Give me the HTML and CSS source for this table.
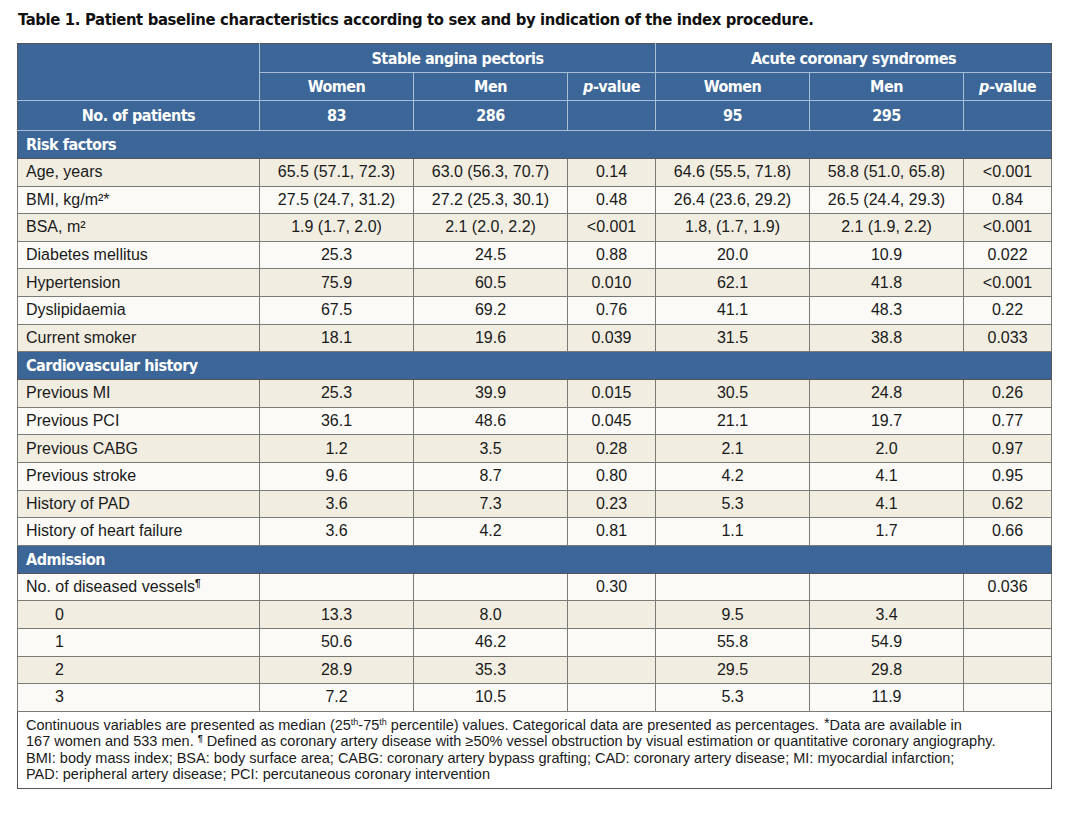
FILE: index.html
```html
<!DOCTYPE html>
<html>
<head>
<meta charset="utf-8">
<link rel="stylesheet" href="styles.css">
</head>
<body>
<div class="page">
<h1 class="title">Table 1. Patient baseline characteristics according to sex and by indication of the index procedure.</h1>
<table class="tbl">
<colgroup>
<col class="c-label"><col class="c-num"><col class="c-num"><col class="c-p"><col class="c-num"><col class="c-num"><col class="c-p">
</colgroup>
<thead>
<tr class="h1"><th rowspan="2"></th><th colspan="3">Stable angina pectoris</th><th colspan="3">Acute coronary syndromes</th></tr>
<tr class="h2"><th>Women</th><th>Men</th><th><i>p</i>-value</th><th>Women</th><th>Men</th><th><i>p</i>-value</th></tr>
<tr class="h3"><th>No. of patients</th><th>83</th><th>286</th><th></th><th>95</th><th>295</th><th></th></tr>
</thead>
<tbody>
<tr class="sec"><td colspan="7">Risk factors</td></tr>
<tr class="a"><td>Age, years</td><td>65.5 (57.1, 72.3)</td><td>63.0 (56.3, 70.7)</td><td>0.14</td><td>64.6 (55.5, 71.8)</td><td>58.8 (51.0, 65.8)</td><td>&lt;0.001</td></tr>
<tr class="b"><td>BMI, kg/m²*</td><td>27.5 (24.7, 31.2)</td><td>27.2 (25.3, 30.1)</td><td>0.48</td><td>26.4 (23.6, 29.2)</td><td>26.5 (24.4, 29.3)</td><td>0.84</td></tr>
<tr class="a"><td>BSA, m²</td><td>1.9 (1.7, 2.0)</td><td>2.1 (2.0, 2.2)</td><td>&lt;0.001</td><td>1.8, (1.7, 1.9)</td><td>2.1 (1.9, 2.2)</td><td>&lt;0.001</td></tr>
<tr class="b"><td>Diabetes mellitus</td><td>25.3</td><td>24.5</td><td>0.88</td><td>20.0</td><td>10.9</td><td>0.022</td></tr>
<tr class="a"><td>Hypertension</td><td>75.9</td><td>60.5</td><td>0.010</td><td>62.1</td><td>41.8</td><td>&lt;0.001</td></tr>
<tr class="b"><td>Dyslipidaemia</td><td>67.5</td><td>69.2</td><td>0.76</td><td>41.1</td><td>48.3</td><td>0.22</td></tr>
<tr class="a"><td>Current smoker</td><td>18.1</td><td>19.6</td><td>0.039</td><td>31.5</td><td>38.8</td><td>0.033</td></tr>
<tr class="sec"><td colspan="7">Cardiovascular history</td></tr>
<tr class="a"><td>Previous MI</td><td>25.3</td><td>39.9</td><td>0.015</td><td>30.5</td><td>24.8</td><td>0.26</td></tr>
<tr class="b"><td>Previous PCI</td><td>36.1</td><td>48.6</td><td>0.045</td><td>21.1</td><td>19.7</td><td>0.77</td></tr>
<tr class="a"><td>Previous CABG</td><td>1.2</td><td>3.5</td><td>0.28</td><td>2.1</td><td>2.0</td><td>0.97</td></tr>
<tr class="b"><td>Previous stroke</td><td>9.6</td><td>8.7</td><td>0.80</td><td>4.2</td><td>4.1</td><td>0.95</td></tr>
<tr class="a"><td>History of PAD</td><td>3.6</td><td>7.3</td><td>0.23</td><td>5.3</td><td>4.1</td><td>0.62</td></tr>
<tr class="b"><td>History of heart failure</td><td>3.6</td><td>4.2</td><td>0.81</td><td>1.1</td><td>1.7</td><td>0.66</td></tr>
<tr class="sec"><td colspan="7">Admission</td></tr>
<tr class="b"><td>No. of diseased vessels<sup class="pil">¶</sup></td><td></td><td></td><td>0.30</td><td></td><td></td><td>0.036</td></tr>
<tr class="a"><td class="ind">0</td><td>13.3</td><td>8.0</td><td></td><td>9.5</td><td>3.4</td><td></td></tr>
<tr class="b"><td class="ind">1</td><td>50.6</td><td>46.2</td><td></td><td>55.8</td><td>54.9</td><td></td></tr>
<tr class="a"><td class="ind">2</td><td>28.9</td><td>35.3</td><td></td><td>29.5</td><td>29.8</td><td></td></tr>
<tr class="b"><td class="ind">3</td><td>7.2</td><td>10.5</td><td></td><td>5.3</td><td>11.9</td><td></td></tr>
</tbody>
<tfoot>
<tr><td colspan="7" class="note">Continuous variables are presented as median (25<sup>th</sup>-75<sup>th</sup> percentile) values. Categorical data are presented as percentages. <span class="ast">*</span>Data are available in<br>167 women and 533 men. <sup class="pil">¶</sup> Defined as coronary artery disease with ≥50% vessel obstruction by visual estimation or quantitative coronary angiography.<br>BMI: body mass index; BSA: body surface area; CABG: coronary artery bypass grafting; CAD: coronary artery disease; MI: myocardial infarction;<br>PAD: peripheral artery disease; PCI: percutaneous coronary intervention</td></tr>
</tfoot>
</table>
</div>
</body>
</html>
```

FILE: styles.css
```css
html, body {
  margin: 0;
  padding: 0;
  background: #ffffff;
}
.page {
  padding: 10px 0 0 17px;
}
.title {
  margin: 0 0 0 1px;
  font-family: "DejaVu Sans", sans-serif;
  font-stretch: condensed;
  font-weight: bold;
  font-size: 16.5px;
  line-height: 20px;
  letter-spacing: -0.35px;
  color: #111;
  height: 33px;
}
.tbl {
  border-collapse: collapse;
  width: 1034px;
  table-layout: fixed;
  font-family: "Liberation Sans", Arial, sans-serif;
  font-size: 16px;
  color: #1a1a1a;
  border: 1px solid #555;
}
.c-label { width: 242px; }
.c-num { width: 154px; }
.c-p { width: 88px; }
thead th, .sec td {
  background: #3c6697;
  color: #fff;
  font-family: "DejaVu Sans", sans-serif;
  font-stretch: condensed;
  font-weight: bold;
  font-size: 16px;
  letter-spacing: -0.5px;
  text-align: center;
  padding: 0;
}
thead th {
  border: 1.5px solid #a9bdd6;
}
thead tr.h1 th { border-top-color: #555; height: 28px; }
thead tr.h2 th { height: 27px; }
thead tr.h3 th { height: 29px; border-bottom-color: #a9bdd6; }
thead th:first-child { border-left-color: #555; }
thead th:last-child { border-right-color: #555; }
thead tr.h2 th:last-child, thead tr.h3 th:last-child { border-right-color: #555; }
thead tr.h1 th:first-child { border-left-color: #555; }
thead i { font-style: italic; }
.sec td {
  text-align: left;
  padding-left: 8px;
  height: 27px;
  border: 1px solid #555;
}
tbody td {
  height: 26.6px;
  padding: 0;
  text-align: center;
  border: 1px solid #7a7a76;
  white-space: nowrap;
}
tbody td:first-child {
  text-align: left;
  padding-left: 8px;
}
tbody td.ind { padding-left: 37px; }
tr.a td { background: #f1ede1; }
tr.b td { background: #fbfaf6; }
.pil {
  font-size: 10px;
  font-weight: bold;
  vertical-align: 5px;
  line-height: 0;
}
.note {
  background: #fff;
  border: 1px solid #555;
  padding: 5px 8px 5px 8px;
  font-size: 14.5px;
  line-height: 16.6px;
  text-align: left;
  color: #1a1a1a;
}
.note sup {
  font-size: 9px;
  vertical-align: 5px;
  line-height: 0;
}
.note .ast {
  position: relative;
  top: -2px;
  margin-left: 1px;
}
```
